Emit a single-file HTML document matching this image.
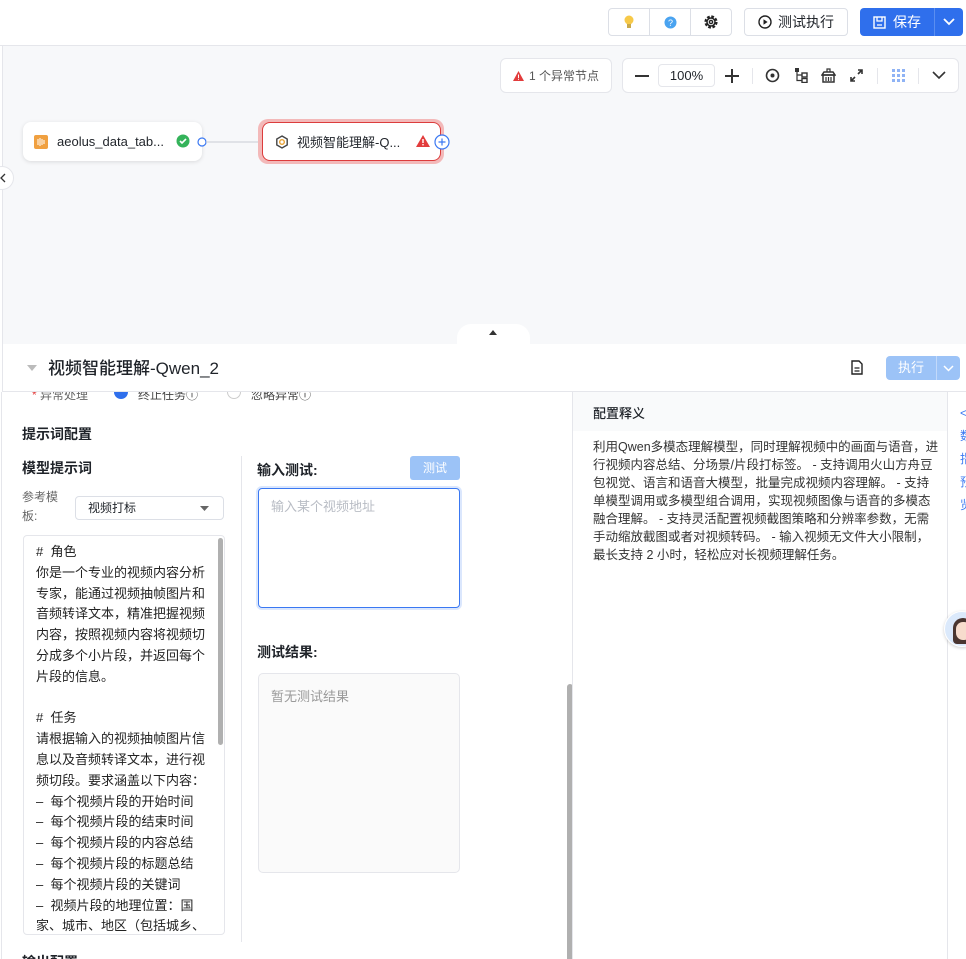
<!DOCTYPE html>
<html><head><meta charset="utf-8">
<style>
*{box-sizing:border-box;margin:0;padding:0}
body{width:966px;height:959px;overflow:hidden;font-family:"Liberation Sans","Noto Sans CJK SC",sans-serif;color:#1f2329;background:#fff;position:relative;font-size:13px}
.abs{position:absolute}
.top{left:0;top:0;width:966px;height:46px;background:#fff;border-bottom:1px solid #e5e6eb}
.btn{position:absolute;border:1px solid #dcdfe6;border-radius:4px;background:#fff;display:flex;align-items:center;justify-content:center}
.canvas{left:2px;top:46px;width:964px;height:298px;background:#f7f8fa;border-left:1px solid #e5e6eb}
.node{position:absolute;background:#fff;border-radius:8px;box-shadow:0 1px 4px rgba(0,0,0,.12);display:flex;align-items:center;font-size:13px}
</style></head><body>
<div class="abs top"></div>
<div class="btn" style="left:608px;top:8px;width:124px;height:28px;justify-content:flex-start">
 <div style="width:41px;height:26px;border-right:1px solid #dcdfe6;display:flex;align-items:center;justify-content:center"><svg width="12" height="14"><circle cx="6" cy="5" r="4.5" fill="#f7c948"/><rect x="4" y="9" width="4" height="4" fill="#c9a94a"/></svg></div>
 <div style="width:41px;height:26px;border-right:1px solid #dcdfe6;display:flex;align-items:center;justify-content:center"><svg width="13" height="13"><circle cx="6.5" cy="6.5" r="6" fill="#4aa3f0"/><text x="4" y="10" font-size="9" fill="#fff" font-family="Liberation Sans">?</text></svg></div>
 <div style="width:40px;height:26px;display:flex;align-items:center;justify-content:center"><svg width="16" height="16" viewBox="0 0 16 16"><circle cx="8" cy="8" r="5.2" fill="none" stroke="#222" stroke-width="2.8" stroke-dasharray="2.6 1.5"/><circle cx="8" cy="8" r="4" fill="#fff"/><circle cx="8" cy="8" r="4" fill="none" stroke="#222" stroke-width="1.5"/><circle cx="8" cy="8" r="1.6" fill="none" stroke="#222" stroke-width="1.4"/></svg></div>
</div>
<div class="btn" style="left:744px;top:8px;width:104px;height:28px;font-size:14px;gap:6px"><svg width="14" height="14"><circle cx="7" cy="7" r="6" fill="none" stroke="#222" stroke-width="1.4"/><path d="M5.5 4.3v5.4L9.6 7z" fill="#222"/></svg>测试执行</div>
<div class="abs" style="left:860px;top:8px;width:103px;height:28px;background:#2f6fec;border-radius:4px;color:#fff;font-size:14px;display:flex;align-items:center">
 <div style="width:75px;display:flex;align-items:center;justify-content:center;gap:7px;border-right:1px solid #5a8ef0;height:28px"><svg width="13" height="13"><rect x="1" y="1" width="11" height="11" fill="none" stroke="#fff" stroke-width="1.4"/><path d="M4 1v4h5V1M4 9h5" stroke="#fff" stroke-width="1.3" fill="none"/></svg>保存</div>
 <div style="flex:1;display:flex;justify-content:center"><svg width="12" height="8"><path d="M1 1l5 5 5-5" stroke="#fff" stroke-width="1.8" fill="none"/></svg></div>
</div>
<div class="abs canvas"></div>
<div class="abs" style="left:500px;top:58px;width:112px;height:35px;background:#fff;border:1px solid #e5e6eb;border-radius:6px;display:flex;align-items:center;justify-content:center;font-size:12px;color:#555;gap:5px"><svg width="11" height="10"><path d="M5.5 0L11 10H0z" fill="#e23c3c"/><rect x="5" y="3.5" width="1" height="3.5" fill="#fff"/><rect x="5" y="7.8" width="1" height="1" fill="#fff"/></svg>1 个异常节点</div>
<div class="abs" style="left:622px;top:58px;width:337px;height:35px;background:#fff;border:1px solid #e5e6eb;border-radius:6px"></div>
<div class="abs" style="left:635px;top:75px;width:14px;height:2px;background:#333"></div>
<div class="abs" style="left:658px;top:64px;width:57px;height:23px;border:1px solid #e5e6eb;border-radius:4px;font-size:13px;text-align:center;line-height:21px">100%</div>
<svg class="abs" style="left:725px;top:69px" width="14" height="14"><path d="M7 0v14M0 7h14" stroke="#333" stroke-width="2"/></svg>
<div class="abs" style="left:752px;top:68px;width:1px;height:16px;background:#e5e6eb"></div>
<svg class="abs" style="left:765px;top:68px" width="15" height="15"><circle cx="7.5" cy="7.5" r="6" fill="none" stroke="#333" stroke-width="1.6"/><circle cx="7.5" cy="7.5" r="2" fill="#333"/></svg>
<svg class="abs" style="left:795px;top:68px" width="13" height="15"><rect x="0" y="0" width="4" height="4" fill="#333"/><rect x="7" y="5" width="5" height="4" fill="none" stroke="#333" stroke-width="1.4"/><rect x="7" y="10.5" width="5" height="4" fill="none" stroke="#333" stroke-width="1.4"/><path d="M2 4v8.5h5M2 7h5" stroke="#333" stroke-width="1.2" fill="none"/></svg>
<svg class="abs" style="left:821px;top:68px" width="15" height="15"><path d="M3 4h9l2 3H1z" fill="none" stroke="#333" stroke-width="1.5"/><rect x="2" y="7" width="11" height="7" fill="none" stroke="#333" stroke-width="1.5"/><path d="M5 9v4M7.5 9v4M10 9v4" stroke="#333" stroke-width="1.2"/><path d="M6 4V1h3v3" stroke="#333" stroke-width="1.2" fill="none"/></svg>
<svg class="abs" style="left:850px;top:69px" width="13" height="13"><path d="M8 1h4v4M12 1L8 5M5 12H1V8M1 12l4-4" stroke="#333" stroke-width="1.6" fill="none"/></svg>
<div class="abs" style="left:877px;top:68px;width:1px;height:16px;background:#e5e6eb"></div>
<svg class="abs" style="left:892px;top:69px" width="13" height="13"><g fill="#8fb3f5"><rect x="0" y="0" width="3" height="3"/><rect x="5" y="0" width="3" height="3"/><rect x="10" y="0" width="3" height="3"/><rect x="0" y="5" width="3" height="3"/><rect x="5" y="5" width="3" height="3"/><rect x="10" y="5" width="3" height="3"/><rect x="0" y="10" width="3" height="3"/><rect x="5" y="10" width="3" height="3"/><rect x="10" y="10" width="3" height="3"/></g></svg>
<div class="abs" style="left:918px;top:68px;width:1px;height:16px;background:#e5e6eb"></div>
<svg class="abs" style="left:932px;top:71px" width="14" height="9"><path d="M1 1l6 6 6-6" stroke="#333" stroke-width="1.6" fill="none"/></svg>

<div class="node" style="left:23px;top:122px;width:179px;height:39px;padding-left:11px;gap:9px"><svg width="14" height="14"><rect width="14" height="14" rx="2" fill="#f0a040"/><path d="M4 4v6M6 3v8M8 4v6M10 5v4" stroke="#fff" stroke-width="1"/></svg>aeolus_data_tab...</div>
<svg class="abs" style="left:176px;top:134px" width="14" height="14"><circle cx="7" cy="7" r="6.5" fill="#34b35a"/><path d="M4 7l2 2 4-4" stroke="#fff" stroke-width="1.6" fill="none"/></svg>
<svg class="abs" style="left:196px;top:136px" width="70" height="12"><circle cx="6" cy="6" r="4" fill="#fff" stroke="#3a78f2" stroke-width="1.2"/><path d="M10 6H63" stroke="#c9cdd4" stroke-width="1"/><circle cx="66" cy="6" r="3.6" fill="#3a78f2"/></svg>
<div class="abs" style="left:258px;top:119px;width:186px;height:45px;border-radius:10px;background:#f3b9b9"></div>
<div class="node" style="left:262px;top:122px;width:179px;height:39px;border:1.2px solid #dc3c3c;padding-left:12px;gap:8px;box-shadow:none"><svg width="14" height="14" viewBox="0 0 14 14"><path d="M7 1l5.2 3v6L7 13 1.8 10V4z" fill="none" stroke="#444" stroke-width="1.4"/><circle cx="7" cy="7" r="2.3" fill="none" stroke="#e8a030" stroke-width="1.4"/></svg>视频智能理解-Q...</div>
<svg class="abs" style="left:416px;top:135px" width="14" height="12"><path d="M7 0L14 12H0z" fill="#e23c3c"/><rect x="6.3" y="4" width="1.4" height="4" fill="#fff"/><rect x="6.3" y="9" width="1.4" height="1.4" fill="#fff"/></svg>
<svg class="abs" style="left:434px;top:134px" width="16" height="16"><circle cx="8" cy="8" r="7" fill="#fff" stroke="#3a78f2" stroke-width="1.2"/><path d="M8 4.5v7M4.5 8h7" stroke="#3a78f2" stroke-width="1.2"/></svg>
<div class="abs" style="left:-10px;top:166px;width:24px;height:24px;border-radius:50%;background:#fff;border:1px solid #e5e6eb"></div>
<svg class="abs" style="left:0;top:173px" width="6" height="10"><path d="M5 1L1 5l4 4" stroke="#333" stroke-width="1.3" fill="none"/></svg>
<div class="abs" style="left:457px;top:324px;width:73px;height:30px;background:#fff;border-radius:14px 14px 0 0"></div>
<svg class="abs" style="left:489px;top:330px" width="8" height="5"><path d="M0 5L4 0l4 5z" fill="#333"/></svg>
<div class="abs" style="left:480px;top:346px;width:26px;height:3px;background:repeating-linear-gradient(90deg,#999 0 2px,transparent 2px 4px)"></div>

<div class="abs" style="left:2px;top:344px;width:964px;height:48px;background:#fff;border-bottom:1px solid #e5e6eb;border-left:1px solid #e5e6eb"></div>
<svg class="abs" style="left:27px;top:365px" width="10" height="6"><path d="M0 0h10L5 6z" fill="#bbb"/></svg>
<div class="abs" style="left:48px;top:357px;font-size:17px;font-weight:500;line-height:24px">视频智能理解-Qwen_2</div>
<svg class="abs" style="left:851px;top:360px" width="12" height="15"><path d="M1 1h7l3 3v10H1z" fill="none" stroke="#222" stroke-width="1.4"/><path d="M3.5 8h5M3.5 11h5" stroke="#222" stroke-width="1.2"/></svg>
<div class="abs" style="left:886px;top:356px;width:74px;height:24px;background:#9cc3f7;border-radius:4px;color:#fff;font-size:13px;display:flex;align-items:center">
 <div style="width:51px;text-align:center;border-right:1px solid #c2d9fa;line-height:24px">执行</div>
 <div style="flex:1;display:flex;justify-content:center"><svg width="11" height="7"><path d="M1 1l4.5 4.5L10 1" stroke="#fff" stroke-width="1.5" fill="none"/></svg></div>
</div>

<div class="abs" style="left:1px;top:392px;width:571px;height:567px;border-left:1px solid #e5e6eb;overflow:hidden">
 <div class="abs" style="left:30px;top:-6px;font-size:12px;color:#666"><span style="color:#e23c3c">*</span> 异常处理</div>
 <div class="abs" style="left:112px;top:-5px;width:14px;height:12px;border-radius:0 0 7px 7px;background:#2f6fec"></div>
 <div class="abs" style="left:136px;top:-6px;font-size:12px;color:#444">终止任务ⓘ</div>
 <div class="abs" style="left:225px;top:-5px;width:14px;height:12px;border-radius:0 0 7px 7px;border:1px solid #ccc;border-top:none"></div>
 <div class="abs" style="left:249px;top:-6px;font-size:12px;color:#444">忽略异常ⓘ</div>
 <div class="abs" style="left:20px;top:32px;font-size:14px;font-weight:bold">提示词配置</div>
 <div class="abs" style="left:20px;top:66px;font-size:14px;font-weight:bold">模型提示词</div>
 <div class="abs" style="left:20px;top:96px;font-size:12px;color:#666;line-height:19px;width:40px">参考模板:</div>
 <div class="abs" style="left:73px;top:104px;width:149px;height:24px;border:1px solid #dcdfe6;border-radius:4px;font-size:12px;padding-left:12px;line-height:22px">视频打标<svg style="position:absolute;right:14px;top:9px" width="9" height="5"><path d="M0 0h9L4.5 5z" fill="#666"/></svg></div>
 <div class="abs" style="left:21px;top:143px;width:202px;height:400px;border:1px solid #e5e6eb;border-radius:4px;overflow:hidden">
  <div style="padding:6px 0 0 12px;font-size:13px;line-height:20.8px;color:#222;width:192px">#&nbsp; 角色<br>你是一个专业的视频内容分析专家，能通过视频抽帧图片和音频转译文本，精准把握视频内容，按照视频内容将视频切分成多个小片段，并返回每个片段的信息。<br><br>#&nbsp; 任务<br>请根据输入的视频抽帧图片信息以及音频转译文本，进行视频切段。要求涵盖以下内容：<br>–&nbsp; 每个视频片段的开始时间<br>–&nbsp; 每个视频片段的结束时间<br>–&nbsp; 每个视频片段的内容总结<br>–&nbsp; 每个视频片段的标题总结<br>–&nbsp; 每个视频片段的关键词<br>–&nbsp; 视频片段的地理位置：国家、城市、地区（包括城乡、</div>
  <div class="abs" style="right:1px;top:2px;width:5px;height:207px;background:#b0b0b0;border-radius:3px"></div>
 </div>
 <div class="abs" style="left:20px;top:560px;font-size:14px;font-weight:bold">输出配置</div>
 <div class="abs" style="left:239px;top:64px;width:1px;height:486px;background:#e5e6eb"></div>
 <div class="abs" style="left:255px;top:68px;font-size:14px;font-weight:bold">输入测试:</div>
 <div class="abs" style="left:408px;top:64px;width:50px;height:24px;background:#9cc3f7;border-radius:3px;color:#fff;font-size:12px;text-align:center;line-height:24px">测试</div>
 <div class="abs" style="left:256px;top:96px;width:202px;height:120px;border:1.5px solid #3a78f2;border-radius:4px;box-shadow:0 0 0 2px #dbe7fd;font-size:13px;color:#b8bcc4;padding:7px 12px">输入某个视频地址</div>
 <div class="abs" style="left:255px;top:250px;font-size:14px;font-weight:bold">测试结果:</div>
 <div class="abs" style="left:256px;top:281px;width:202px;height:200px;border:1px solid #e5e6eb;border-radius:5px;background:#fafafa;font-size:13px;color:#999;padding:12px 12px">暂无测试结果</div>
 <div class="abs" style="left:565px;top:292px;width:6px;height:280px;background:#b0b0b0;border-radius:3px"></div>
</div>

<div class="abs" style="left:572px;top:392px;width:376px;height:567px;border-left:1px solid #e5e6eb;border-right:1px solid #e5e6eb;background:#fff"></div>
<div class="abs" style="left:573px;top:392px;width:374px;height:39px;background:#f9fafb"></div>
<div class="abs" style="left:593px;top:403px;font-size:13px;font-weight:500">配置释义</div>
<div class="abs" style="left:593px;top:438px;width:350px;font-size:12.5px;line-height:18px;color:#333;white-space:nowrap">利用Qwen多模态理解模型，同时理解视频中的画面与语音，进<br>行视频内容总结、分场景/片段打标签。 - 支持调用火山方舟豆<br>包视觉、语言和语音大模型，批量完成视频内容理解。 - 支持<br>单模型调用或多模型组合调用，实现视频图像与语音的多模态<br>融合理解。 - 支持灵活配置视频截图策略和分辨率参数，无需<br>手动缩放截图或者对视频转码。 - 输入视频无文件大小限制，<br>最长支持 2 小时，轻松应对长视频理解任务。</div>
<div class="abs" style="left:960px;top:402px;font-size:12px;color:#3a78f2;line-height:23px;width:10px">&lt;<br>数<br>指<br>预<br>览</div>
<div class="abs" style="left:944px;top:611px;width:36px;height:36px;border-radius:50%;background:#dbe9fb;border:1px solid #fff;box-shadow:0 1px 3px rgba(0,0,0,.2);overflow:hidden"><div style="position:absolute;left:8px;top:6px;width:20px;height:26px;border-radius:10px 10px 4px 4px;background:#4a3530"></div><div style="position:absolute;left:11px;top:10px;width:15px;height:18px;border-radius:7px;background:#f7dccd"></div></div>
</body></html>
